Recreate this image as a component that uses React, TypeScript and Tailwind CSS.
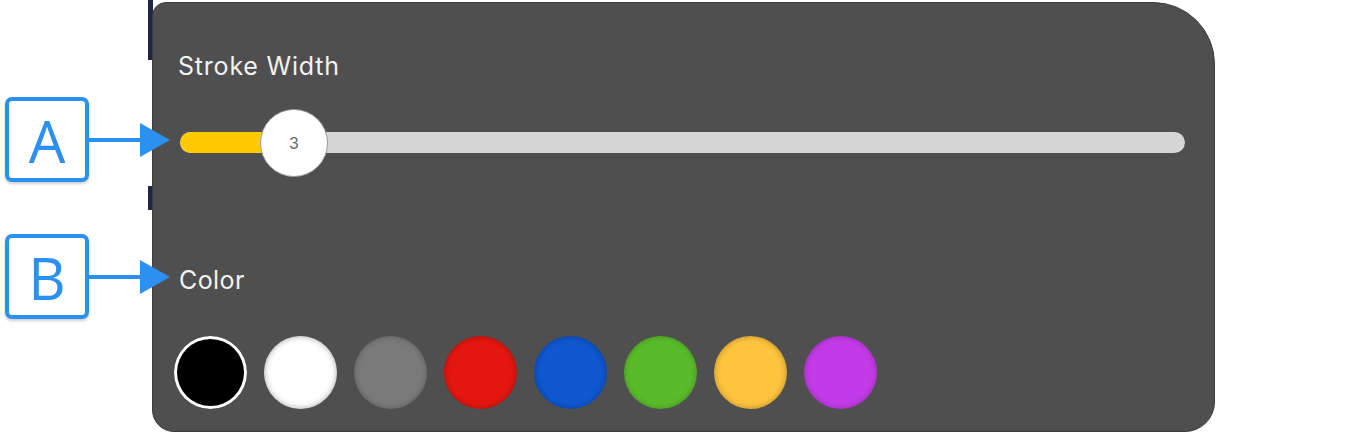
import React from "react";

const SWATCHES = [
  { name: "black", cls: "bg-black ring-[3px] ring-white ring-inset" },
  { name: "white", cls: "bg-white shadow-[inset_0_0_6px_rgba(0,0,0,0.35)]" },
  { name: "gray", cls: "bg-[#7a7a7a] shadow-[inset_0_0_6px_rgba(0,0,0,0.25)]" },
  { name: "red", cls: "bg-[#e41710] shadow-[inset_0_0_6px_rgba(0,0,0,0.3)]" },
  { name: "blue", cls: "bg-[#0f58d0] shadow-[inset_0_0_6px_rgba(0,0,0,0.3)]" },
  { name: "green", cls: "bg-[#5abb2a] shadow-[inset_0_0_6px_rgba(0,0,0,0.25)]" },
  { name: "yellow", cls: "bg-[#fec43e] shadow-[inset_0_0_6px_rgba(0,0,0,0.3)]" },
  { name: "purple", cls: "bg-[#c33be8] shadow-[inset_0_0_6px_rgba(0,0,0,0.25)]" },
];

function Callout({ letter, top }: { letter: string; top: string }) {
  return (
    <div className={`absolute left-[5px] ${top} flex items-center z-10`}>
      <div className="w-[84px] h-[85px] rounded-[7px] border-[4px] border-[#2c90f0] bg-white shadow-[0_2px_3px_rgba(0,0,0,0.2)] flex items-center justify-center">
        <span className="text-[58px] leading-none text-[#2c90f0] font-['Open_Sans',sans-serif] mt-[2px]">
          {letter}
        </span>
      </div>
      <svg width="82" height="36" viewBox="0 0 82 36" className="-ml-[1px]">
        <line x1="0" y1="18" x2="54" y2="18" stroke="#2c90f0" strokeWidth="4" />
        <polygon points="52,1 82,18 52,35" fill="#2c90f0" />
      </svg>
    </div>
  );
}

export default function App() {
  const value = 3;

  return (
    <div className="relative w-[1360px] h-[433px] bg-white overflow-hidden font-['Inter',sans-serif]">
      {/* toolbar edge peeking out behind the popover */}
      <div className="absolute left-[148px] top-0 w-[5px] h-[60px] bg-[#1c2647]" />
      <div className="absolute left-[148px] top-[186px] w-[5px] h-[24px] bg-[#1c2647]" />

      <Callout letter="A" top="top-[97px]" />
      <Callout letter="B" top="top-[234px]" />

      <div className="relative ml-[152px] mt-[2px] w-[1063px] h-[430px] bg-[#4f4f4f] rounded-tl-[14px] rounded-tr-[62px] rounded-br-[30px] rounded-bl-[22px] border border-[#3d3d3d] pl-[25px] pr-[29px] pt-[47px] flex flex-col">
        <div className="text-[25px] leading-[32px] text-[#f2f2f2] tracking-[0.8px]">Stroke Width</div>

        {/* stroke width slider */}
        <div className="relative mt-[26px] h-[68px] flex items-center">
          <div className="ml-[2px] w-full h-[21px] rounded-full bg-[#d6d6d6] flex overflow-hidden">
            <div className="w-[100px] h-full bg-[#ffcb00] rounded-full" />
          </div>
          <div className="absolute left-[82px] top-[1px] w-[68px] h-[68px] rounded-full bg-white border border-[#9a9a9a] flex items-center justify-center">
            <span className="text-[16px] text-[#666]">{value}</span>
          </div>
        </div>

        <div className="mt-[88px] ml-[1px] text-[25px] leading-[32px] text-[#f2f2f2] tracking-[0.4px]">Color</div>

        <div className="mt-[40px] -ml-[4px] flex gap-[17px]">
          {SWATCHES.map((s) => (
            <div key={s.name} className={`w-[73px] h-[73px] rounded-full ${s.cls}`} />
          ))}
        </div>
      </div>
    </div>
  );
}
